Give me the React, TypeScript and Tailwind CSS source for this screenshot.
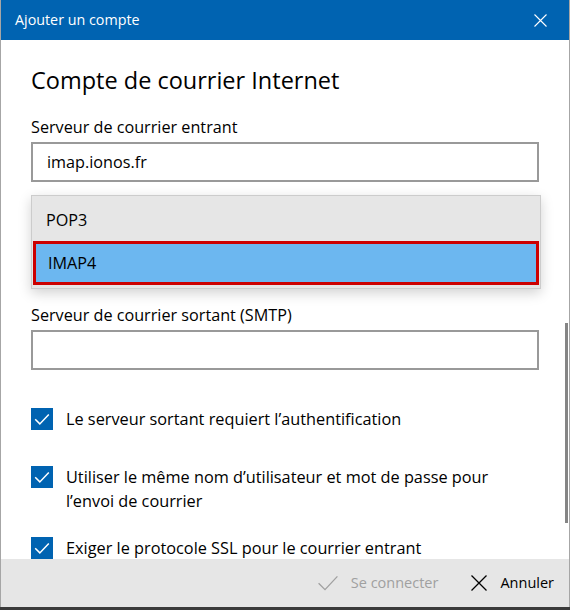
function CheckRow({ label }: { label: React.ReactNode }) {
  return (
    <div className="flex items-start gap-[13px]">
      <div className="mt-[1px] w-[22px] h-[22px] shrink-0 bg-[#0063b1] flex items-center justify-center">
        <svg width="16" height="16" viewBox="0 0 16 16" fill="none">
          <path d="M1.2 8.3 L5.8 12.9 L14.8 3.6" stroke="white" strokeWidth="1.5" />
        </svg>
      </div>
      <div className="text-[16.3px] leading-[24px] text-black">{label}</div>
    </div>
  );
}

export default function App() {
  return (
    <div className="w-[570px] h-[610px] bg-[#3b3b3b] font-['Segoe_UI','Open_Sans',sans-serif]">
      <div className="h-[607px] flex flex-col bg-white border-x border-[#a6a6a6]">
        {/* Title bar */}
        <div className="h-10 shrink-0 bg-[#0063b1] flex items-center justify-between pl-[14px] pr-[22px]">
          <span className="text-white text-[14.3px]">Ajouter un compte</span>
          <svg width="13" height="13" viewBox="0 0 13 13" fill="none">
            <path d="M0.5 0.5 L12.5 12.5 M12.5 0.5 L0.5 12.5" stroke="white" strokeWidth="1.1" />
          </svg>
        </div>

        {/* Content */}
        <div className="relative flex-1 overflow-hidden">
          <div className="px-[30px] pt-[24px]">
            <h1 className="text-[23.5px] leading-[32px] text-black">Compte de courrier Internet</h1>

            <div className="mt-[21px] text-[16.2px] leading-[20px] text-black">Serveur de courrier entrant</div>
            <div className="mt-[5px] h-10 border-2 border-[#999999] flex items-center px-[14px] text-[16.2px] text-black">
              imap.ionos.fr
            </div>

            <div className="h-[123px]" />

            <div className="text-[16.2px] leading-[20px] text-black">Serveur de courrier sortant (SMTP)</div>
            <div className="mt-[5px] h-10 border-2 border-[#999999]" />

            <div className="mt-[37px] flex flex-col">
              <CheckRow label="Le serveur sortant requiert l’authentification" />
              <div className="mt-[34px]">
                <CheckRow
                  label={
                    <>
                      Utiliser le même nom d’utilisateur et mot de passe pour
                      <br />
                      l’envoi de courrier
                    </>
                  }
                />
              </div>
              <div className="mt-[23px]">
                <CheckRow label="Exiger le protocole SSL pour le courrier entrant" />
              </div>
            </div>
          </div>

          {/* Dropdown popup */}
          <div className="absolute left-[30px] top-[155px] w-[510px] bg-[#e6e6e6] border border-[#cccccc] shadow-[0_4px_12px_rgba(0,0,0,0.18)] pt-[3px] pb-[3px]">
            <div className="h-[42px] flex items-center px-[14px] text-[16.2px] text-black">POP3</div>
            <div className="h-[44px] mx-[1px] flex items-center px-[12px] text-[16.2px] text-black bg-[#6cb7f0] border-[3px] border-[#cc0000]">
              IMAP4
            </div>
          </div>

          {/* Scrollbar */}
          <div className="absolute right-[1px] top-[283px] w-[3px] h-[200px] bg-[#858585]" />
        </div>

        {/* Footer */}
        <div className="h-[48px] shrink-0 bg-[#e6e6e6] flex items-center justify-end pr-[15px] text-[14.5px]">
          <div className="flex items-center gap-[13px] text-[#a0a0a0]">
            <svg width="20" height="16" viewBox="0 0 20 16" fill="none">
              <path d="M0.6 8.2 L7 14.6 L19.4 1.4" stroke="#a0a0a0" strokeWidth="1.3" />
            </svg>
            <span>Se connecter</span>
          </div>
          <div className="ml-[33px] flex items-center gap-[13px] text-black">
            <svg width="16" height="16" viewBox="0 0 16 16" fill="none">
              <path d="M0.5 0.5 L15.5 15.5 M15.5 0.5 L0.5 15.5" stroke="black" strokeWidth="1.3" />
            </svg>
            <span>Annuler</span>
          </div>
        </div>
      </div>
    </div>
  );
}
